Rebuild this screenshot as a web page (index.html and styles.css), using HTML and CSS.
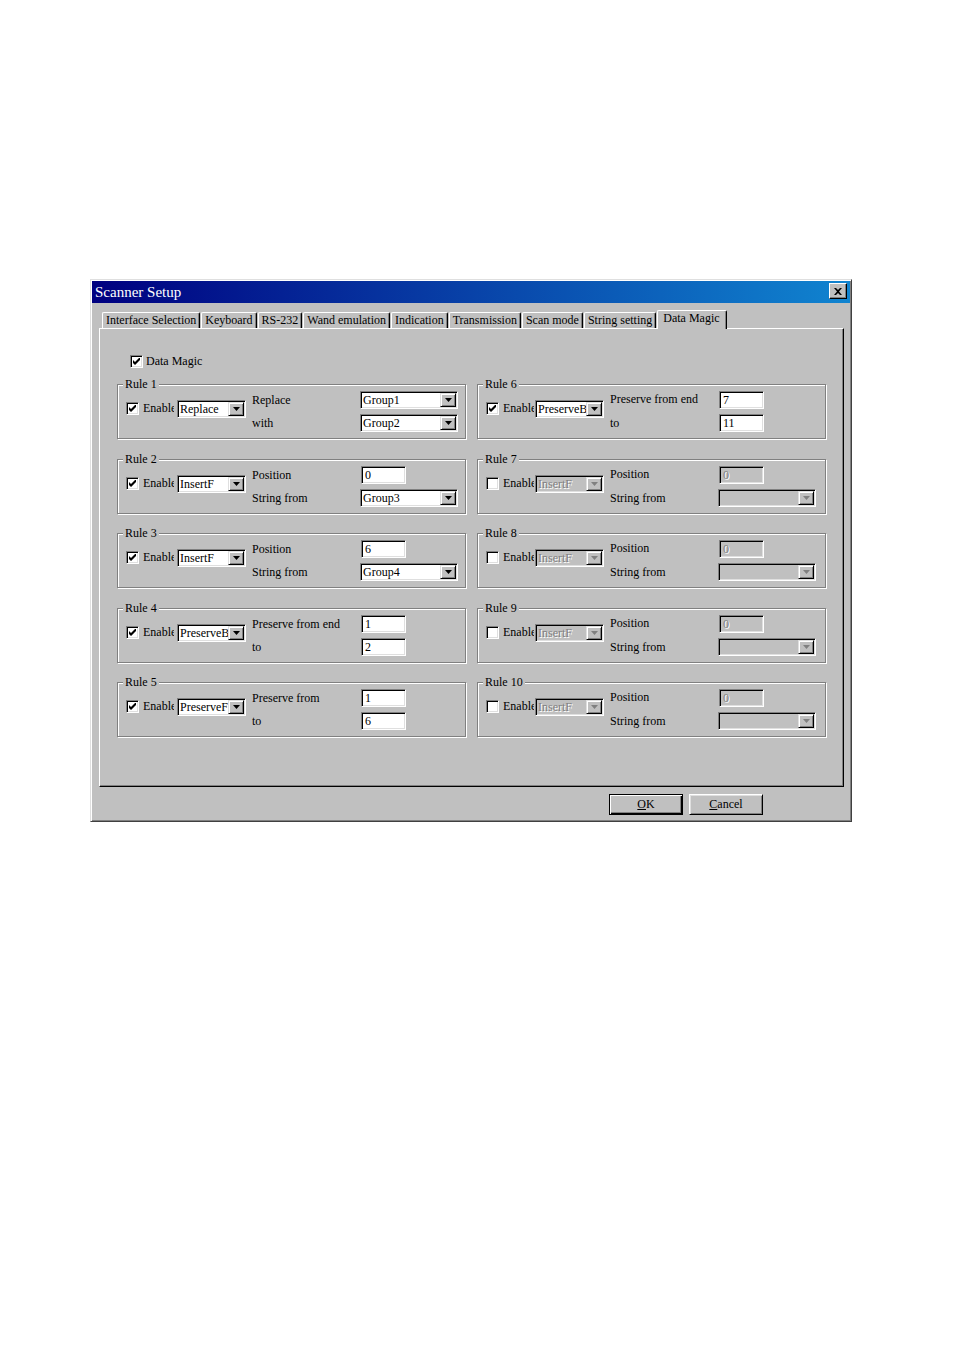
FILE: index.html
```html
<!DOCTYPE html>
<html>
<head>
<meta charset="utf-8">
<title>Scanner Setup</title>
<link rel="stylesheet" href="styles.css">
</head>
<body>
<div class="dialog">
  <div class="titlebar">
    <span class="title">Scanner Setup</span>
    <span class="close"><svg width="8" height="7" viewBox="0 0 8 7"><path d="M0 0 L2 0 L4 2 L6 0 L8 0 L5 3.5 L8 7 L6 7 L4 5 L2 7 L0 7 L3 3.5 Z" fill="#000"/></svg></span>
  </div>
  <div class="client">
    <div class="tabs">
      <div class="tab">Interface Selection</div>
      <div class="tab">Keyboard</div>
      <div class="tab">RS-232</div>
      <div class="tab">Wand emulation</div>
      <div class="tab">Indication</div>
      <div class="tab">Transmission</div>
      <div class="tab">Scan mode</div>
      <div class="tab">String setting</div>
      <div class="tab active">Data Magic</div>
    </div>
    <div class="panel">
      <div class="check-row">
        <span class="cb"><svg width="7" height="7" viewBox="0 0 7 7"><polygon points="0,2 2,4 7,-1 7,2 2,7 0,5" fill="#000"/></svg></span>
        <span>Data Magic</span>
      </div>
      <div class="groups">
        <!-- Left column -->
        <div class="group">
          <div class="legend">Rule 1</div>
          <div class="grp-body">
            <span class="cb"><svg width="7" height="7" viewBox="0 0 7 7"><polygon points="0,2 2,4 7,-1 7,2 2,7 0,5" fill="#000"/></svg></span>
            <span class="enable">Enable</span>
            <div class="combo mode"><span class="val">Replace</span><span class="arrow"><svg width="7" height="4" viewBox="0 0 7 4"><polygon points="0,0 7,0 3.5,4" fill="#000"/></svg></span></div>
            <span class="lbl row1">Replace</span>
            <span class="lbl row2">with</span>
            <div class="combo wide row1"><span class="val">Group1</span><span class="arrow"><svg width="7" height="4" viewBox="0 0 7 4"><polygon points="0,0 7,0 3.5,4" fill="#000"/></svg></span></div>
            <div class="combo wide row2"><span class="val">Group2</span><span class="arrow"><svg width="7" height="4" viewBox="0 0 7 4"><polygon points="0,0 7,0 3.5,4" fill="#000"/></svg></span></div>
          </div>
        </div>
        <div class="group">
          <div class="legend">Rule 2</div>
          <div class="grp-body">
            <span class="cb"><svg width="7" height="7" viewBox="0 0 7 7"><polygon points="0,2 2,4 7,-1 7,2 2,7 0,5" fill="#000"/></svg></span>
            <span class="enable">Enable</span>
            <div class="combo mode"><span class="val">InsertF</span><span class="arrow"><svg width="7" height="4" viewBox="0 0 7 4"><polygon points="0,0 7,0 3.5,4" fill="#000"/></svg></span></div>
            <span class="lbl row1">Position</span>
            <span class="lbl row2">String from</span>
            <div class="edit row1">0</div>
            <div class="combo wide row2"><span class="val">Group3</span><span class="arrow"><svg width="7" height="4" viewBox="0 0 7 4"><polygon points="0,0 7,0 3.5,4" fill="#000"/></svg></span></div>
          </div>
        </div>
        <div class="group">
          <div class="legend">Rule 3</div>
          <div class="grp-body">
            <span class="cb"><svg width="7" height="7" viewBox="0 0 7 7"><polygon points="0,2 2,4 7,-1 7,2 2,7 0,5" fill="#000"/></svg></span>
            <span class="enable">Enable</span>
            <div class="combo mode"><span class="val">InsertF</span><span class="arrow"><svg width="7" height="4" viewBox="0 0 7 4"><polygon points="0,0 7,0 3.5,4" fill="#000"/></svg></span></div>
            <span class="lbl row1">Position</span>
            <span class="lbl row2">String from</span>
            <div class="edit row1">6</div>
            <div class="combo wide row2"><span class="val">Group4</span><span class="arrow"><svg width="7" height="4" viewBox="0 0 7 4"><polygon points="0,0 7,0 3.5,4" fill="#000"/></svg></span></div>
          </div>
        </div>
        <div class="group">
          <div class="legend">Rule 4</div>
          <div class="grp-body">
            <span class="cb"><svg width="7" height="7" viewBox="0 0 7 7"><polygon points="0,2 2,4 7,-1 7,2 2,7 0,5" fill="#000"/></svg></span>
            <span class="enable">Enable</span>
            <div class="combo mode"><span class="val">PreserveB</span><span class="arrow"><svg width="7" height="4" viewBox="0 0 7 4"><polygon points="0,0 7,0 3.5,4" fill="#000"/></svg></span></div>
            <span class="lbl row1">Preserve from end</span>
            <span class="lbl row2">to</span>
            <div class="edit row1">1</div>
            <div class="edit row2">2</div>
          </div>
        </div>
        <div class="group">
          <div class="legend">Rule 5</div>
          <div class="grp-body">
            <span class="cb"><svg width="7" height="7" viewBox="0 0 7 7"><polygon points="0,2 2,4 7,-1 7,2 2,7 0,5" fill="#000"/></svg></span>
            <span class="enable">Enable</span>
            <div class="combo mode"><span class="val">PreserveF</span><span class="arrow"><svg width="7" height="4" viewBox="0 0 7 4"><polygon points="0,0 7,0 3.5,4" fill="#000"/></svg></span></div>
            <span class="lbl row1">Preserve from</span>
            <span class="lbl row2">to</span>
            <div class="edit row1">1</div>
            <div class="edit row2">6</div>
          </div>
        </div>
        <!-- Right column -->
        <div class="group right">
          <div class="legend">Rule 6</div>
          <div class="grp-body">
            <span class="cb"><svg width="7" height="7" viewBox="0 0 7 7"><polygon points="0,2 2,4 7,-1 7,2 2,7 0,5" fill="#000"/></svg></span>
            <span class="enable">Enable</span>
            <div class="combo mode"><span class="val">PreserveB</span><span class="arrow"><svg width="7" height="4" viewBox="0 0 7 4"><polygon points="0,0 7,0 3.5,4" fill="#000"/></svg></span></div>
            <span class="lbl row1">Preserve from end</span>
            <span class="lbl row2">to</span>
            <div class="edit row1">7</div>
            <div class="edit row2">11</div>
          </div>
        </div>
        <div class="group right">
          <div class="legend">Rule 7</div>
          <div class="grp-body">
            <span class="cb"></span>
            <span class="enable">Enable</span>
            <div class="combo mode dis"><span class="val">InsertF</span><span class="arrow"><svg width="7" height="4" viewBox="0 0 7 4"><polygon points="0,0 7,0 3.5,4" fill="#808080"/></svg></span></div>
            <span class="lbl row1">Position</span>
            <span class="lbl row2">String from</span>
            <div class="edit row1 dis">0</div>
            <div class="combo wide row2 dis"><span class="val"></span><span class="arrow"><svg width="7" height="4" viewBox="0 0 7 4"><polygon points="0,0 7,0 3.5,4" fill="#808080"/></svg></span></div>
          </div>
        </div>
        <div class="group right">
          <div class="legend">Rule 8</div>
          <div class="grp-body">
            <span class="cb"></span>
            <span class="enable">Enable</span>
            <div class="combo mode dis"><span class="val">InsertF</span><span class="arrow"><svg width="7" height="4" viewBox="0 0 7 4"><polygon points="0,0 7,0 3.5,4" fill="#808080"/></svg></span></div>
            <span class="lbl row1">Position</span>
            <span class="lbl row2">String from</span>
            <div class="edit row1 dis">0</div>
            <div class="combo wide row2 dis"><span class="val"></span><span class="arrow"><svg width="7" height="4" viewBox="0 0 7 4"><polygon points="0,0 7,0 3.5,4" fill="#808080"/></svg></span></div>
          </div>
        </div>
        <div class="group right">
          <div class="legend">Rule 9</div>
          <div class="grp-body">
            <span class="cb"></span>
            <span class="enable">Enable</span>
            <div class="combo mode dis"><span class="val">InsertF</span><span class="arrow"><svg width="7" height="4" viewBox="0 0 7 4"><polygon points="0,0 7,0 3.5,4" fill="#808080"/></svg></span></div>
            <span class="lbl row1">Position</span>
            <span class="lbl row2">String from</span>
            <div class="edit row1 dis">0</div>
            <div class="combo wide row2 dis"><span class="val"></span><span class="arrow"><svg width="7" height="4" viewBox="0 0 7 4"><polygon points="0,0 7,0 3.5,4" fill="#808080"/></svg></span></div>
          </div>
        </div>
        <div class="group right">
          <div class="legend">Rule 10</div>
          <div class="grp-body">
            <span class="cb"></span>
            <span class="enable">Enable</span>
            <div class="combo mode dis"><span class="val">InsertF</span><span class="arrow"><svg width="7" height="4" viewBox="0 0 7 4"><polygon points="0,0 7,0 3.5,4" fill="#808080"/></svg></span></div>
            <span class="lbl row1">Position</span>
            <span class="lbl row2">String from</span>
            <div class="edit row1 dis">0</div>
            <div class="combo wide row2 dis"><span class="val"></span><span class="arrow"><svg width="7" height="4" viewBox="0 0 7 4"><polygon points="0,0 7,0 3.5,4" fill="#808080"/></svg></span></div>
          </div>
        </div>
      </div>
    </div>
    <div class="buttons">
      <button class="btn default" type="button"><u>O</u>K</button>
      <button class="btn" type="button"><u>C</u>ancel</button>
    </div>
  </div>
</div>
</body>
</html>
```
FILE: styles.css
```css
html, body {
  margin: 0;
  padding: 0;
  background: #ffffff;
}

body {
  font-family: "Liberation Serif", "Times New Roman", serif;
  font-size: 12px;
  color: #000;
}

.dialog {
  margin: 279px 0 0 90px;
  width: 762px;
  box-sizing: border-box;
  background: #c0c0c0;
  border: 1px solid;
  border-color: #dfdfdf #404040 #404040 #dfdfdf;
  box-shadow: inset 1px 1px 0 #ffffff, inset -1px -1px 0 #808080;
  padding: 1px;
}

/* ---------- title bar ---------- */
.titlebar {
  height: 22px;
  display: flex;
  align-items: center;
  justify-content: space-between;
  background: linear-gradient(90deg, #000080 0%, #1084d0 100%);
  padding: 0 3px 0 3px;
}

.title {
  color: #ffffff;
  font-size: 15px;
  line-height: 22px;
  white-space: nowrap;
}

.close {
  width: 18px;
  height: 16px;
  box-sizing: border-box;
  background: #c0c0c0;
  border: 1px solid;
  border-color: #ffffff #000000 #000000 #ffffff;
  box-shadow: inset -1px -1px 0 #808080;
  display: flex;
  align-items: center;
  justify-content: center;
  margin-top: -2px;
}

.close svg { display: block; }

/* ---------- client ---------- */
.client {
  padding: 7px 6px 5px 7px;
}

.tabs {
  display: flex;
  align-items: flex-end;
  height: 18px;
  padding-left: 3px;
  position: relative;
  z-index: 1;
}

.tab {
  height: 16px;
  box-sizing: border-box;
  padding: 0 3px 0 3px;
  margin-right: 1px;
  border-top: 1px solid #ffffff;
  border-left: 1px solid #ffffff;
  border-right: 1px solid #000000;
  box-shadow: inset -1px 0 0 #808080;
  border-radius: 2px 2px 0 0;
  line-height: 15px;
  white-space: nowrap;
  background: #c0c0c0;
}

.tab.active {
  height: 19px;
  margin-bottom: -1px;
  line-height: 14px;
  padding: 0 6px 0 5px;
}

.panel {
  height: 459px;
  box-sizing: border-box;
  border: 1px solid;
  border-color: #ffffff #000000 #000000 #ffffff;
  box-shadow: inset -1px -1px 0 #808080;
  padding: 26px 17px 0 17px;
}

.check-row {
  display: flex;
  align-items: center;
  height: 13px;
  margin-left: 13px;
  margin-bottom: 16px;
  line-height: 13px;
}

.check-row .cb { margin-right: 3px; }

/* ---------- checkbox ---------- */
.cb {
  width: 13px;
  height: 13px;
  box-sizing: border-box;
  background: #ffffff;
  border: 1px solid;
  border-color: #808080 #ffffff #ffffff #808080;
  box-shadow: inset 1px 1px 0 #000000, inset -1px -1px 0 #dfdfdf;
  display: flex;
  align-items: center;
  justify-content: center;
  flex: none;
}

.cb svg { display: block; }

/* ---------- group boxes ---------- */
.groups {
  display: grid;
  grid-template-columns: 349px 349px;
  grid-template-rows: repeat(5, 55px);
  grid-auto-flow: column;
  column-gap: 11px;
  row-gap: 19.5px;
}

.group {
  box-sizing: border-box;
  height: 55px;
  border: 1px solid #808080;
  box-shadow: inset 1px 1px 0 #ffffff, 1px 1px 0 #ffffff;
}

.legend {
  width: fit-content;
  margin: -8px 0 0 5px;
  padding: 0 2px;
  height: 14px;
  line-height: 14px;
  background: #c0c0c0;
  white-space: nowrap;
}

.grp-body {
  display: grid;
  grid-template-columns: 17px 34px 75px 108px 98px;
  grid-template-rows: 18px 18px;
  row-gap: 5px;
  padding-left: 8px;
}

.group.right .grp-body {
  grid-template-columns: 17px 32px 75px 108px 98px;
}

.grp-body .cb {
  grid-column: 1;
  grid-row: 1 / span 2;
  align-self: start;
  margin-top: 11px;
}

.enable {
  grid-column: 2;
  grid-row: 1 / span 2;
  align-self: start;
  margin-top: 10px;
  width: 31px;
  overflow: hidden;
  white-space: nowrap;
  line-height: 14px;
}

.combo.mode {
  grid-column: 3;
  grid-row: 1 / span 2;
  align-self: start;
  margin-top: 9px;
  width: 69px;
}

.lbl {
  grid-column: 4;
  align-self: center;
  white-space: nowrap;
  line-height: 14px;
}

.group.right .lbl.row1 { margin-top: -2px; }

.row1 { grid-row: 1; }
.row2 { grid-row: 2; }

.combo.wide,
.edit {
  grid-column: 5;
}

/* ---------- combo box ---------- */
.combo {
  height: 18px;
  box-sizing: border-box;
  display: flex;
  background: #ffffff;
  border: 1px solid;
  border-color: #808080 #ffffff #ffffff #808080;
  box-shadow: inset 1px 1px 0 #000000, inset -1px -1px 0 #dfdfdf;
  padding: 1px;
}

.combo .val {
  flex: 1;
  min-width: 0;
  overflow: hidden;
  white-space: nowrap;
  line-height: 14px;
  padding-left: 1px;
}

.combo .arrow {
  width: 16px;
  height: 14px;
  flex: none;
  box-sizing: border-box;
  background: #c0c0c0;
  border: 1px solid;
  border-color: #dfdfdf #000000 #000000 #dfdfdf;
  box-shadow: inset 1px 1px 0 #ffffff, inset -1px -1px 0 #808080;
  display: flex;
  align-items: center;
  justify-content: center;
}

.combo .arrow svg { display: block; }

.combo.dis { background: #c0c0c0; }

.combo.dis .val,
.edit.dis {
  color: #808080;
  text-shadow: 1px 1px 0 #ffffff;
}

/* ---------- edit box ---------- */
.edit {
  width: 45px;
  height: 18px;
  box-sizing: border-box;
  margin-left: 1px;
  background: #ffffff;
  border: 1px solid;
  border-color: #808080 #ffffff #ffffff #808080;
  box-shadow: inset 1px 1px 0 #000000, inset -1px -1px 0 #dfdfdf;
  padding: 1px 2px 0 3px;
  line-height: 14px;
  white-space: nowrap;
}

.edit.dis { background: #c0c0c0; }

/* ---------- buttons ---------- */
.buttons {
  display: flex;
  justify-content: flex-end;
  gap: 6px;
  margin-top: 7px;
  padding-right: 81px;
}

.btn {
  width: 74px;
  height: 21px;
  box-sizing: border-box;
  margin: 0;
  padding: 0;
  font-family: "Liberation Serif", "Times New Roman", serif;
  font-size: 12px;
  color: #000;
  background: #c0c0c0;
  border: 1px solid;
  border-color: #ffffff #000000 #000000 #ffffff;
  box-shadow: inset 1px 1px 0 #dfdfdf, inset -1px -1px 0 #808080;
  line-height: 17px;
}

.btn.default {
  border: 1px solid #000000;
  box-shadow: inset 1px 1px 0 #ffffff, inset -1px -1px 0 #000000, inset -2px -2px 0 #808080;
}
```
